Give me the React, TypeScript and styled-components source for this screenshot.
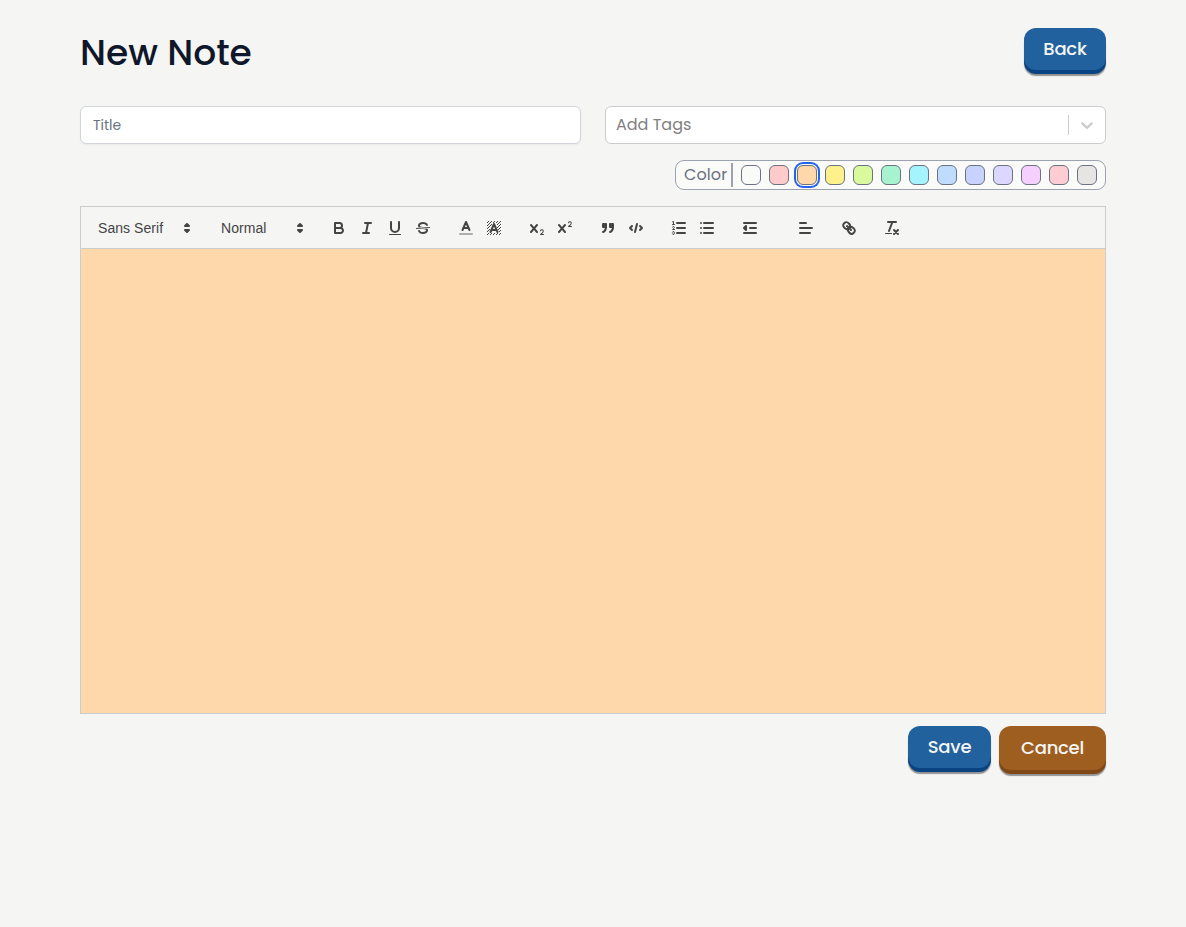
import React from "react";
import styled, { createGlobalStyle } from "styled-components";

const GlobalStyle = createGlobalStyle`
  *, *::before, *::after { box-sizing: border-box; }
  body {
    margin: 0;
    background: #f5f5f4;
    font-family: Poppins, Inter, sans-serif;
    color: #0f172a;
  }
`;

const Page = styled.main`
  width: 1026px;
  min-height: 100vh;
  margin: 0 auto;
  padding-top: 28px;
`;

const Header = styled.header`
  display: flex;
  justify-content: space-between;
  align-items: flex-start;
  height: 78px;
`;

const Heading = styled.h1`
  margin: 5px 0 0;
  font-size: 36px;
  line-height: 40px;
  font-weight: 500;
`;

const Button = styled.button<{ $tone: "blue" | "brown"; $width: number; $height: number }>`
  width: ${(p) => p.$width}px;
  height: ${(p) => p.$height}px;
  padding: 0 0 1px;
  border: 0;
  border-radius: 12px;
  font: inherit;
  font-size: 18px;
  font-weight: 500;
  letter-spacing: -0.25px;
  color: #f5f5f4;
  background: ${(p) => (p.$tone === "blue" ? "#20619e" : "#9e5e20")};
  box-shadow: 0 4px 0 ${(p) => (p.$tone === "blue" ? "#0a4382" : "#7e4817")},
    0 5.5px 1px rgba(0, 0, 0, 0.4);
`;

const Fields = styled.div`
  display: grid;
  grid-template-columns: 501px 501px;
  gap: 24px;
`;

const TitleInput = styled.input`
  height: 38px;
  padding: 0 12px;
  border: 1px solid #d1d5db;
  border-radius: 6px;
  background: #fff;
  box-shadow: 0 1px 2px rgba(0, 0, 0, 0.05);
  font: inherit;
  font-size: 14px;
  outline: 0;
  &::placeholder { color: #6b7280; opacity: 1; }
`;

const TagSelect = styled.div`
  display: flex;
  align-items: center;
  height: 38px;
  padding-left: 10px;
  border: 1px solid #ccc;
  border-radius: 6px;
  background: #fff;
  color: #808080;
  font-size: 16px;
`;

const TagPlaceholder = styled.span`
  flex: 1;
  padding-bottom: 1px;
`;

const Separator = styled.span`
  width: 1px;
  height: 20px;
  background: #ccc;
`;

const Chevron = styled.svg`
  width: 20px;
  height: 20px;
  margin: 0 8px;
  fill: #ccc;
`;

const Palette = styled.div`
  display: flex;
  align-items: center;
  width: 431px;
  height: 30px;
  margin: 16px 0 16px auto;
  padding-left: 8px;
  border: 1px solid #9ca3af;
  border-radius: 9px;
  background: #fafaf9;
`;

const PaletteLabel = styled.span`
  width: 49px;
  height: 24px;
  margin-right: 8px;
  border-right: 2px solid #9ca3af;
  color: #6b7280;
  font-size: 16px;
  line-height: 23px;
  letter-spacing: 0.1px;
`;

const Swatch = styled.button<{ $color: string; $selected: boolean }>`
  width: 20px;
  height: 20px;
  margin-right: 8px;
  padding: 0;
  border: 1px solid #6b7280;
  border-radius: 6px;
  background: ${(p) => p.$color};
  box-shadow: ${(p) => (p.$selected ? "0 0 0 1px #fafaf9, 0 0 0 3px #2563eb" : "none")};
`;

const Toolbar = styled.div`
  display: flex;
  align-items: flex-start;
  height: 43px;
  padding: 9px 8px 8px;
  border: 1px solid #ccc;
  font-family: "Liberation Sans", Arial, sans-serif;
`;

const Group = styled.div<{ $gap?: number }>`
  display: flex;
  margin-right: ${(p) => p.$gap ?? 15}px;
`;

const Picker = styled.div<{ $width: number }>`
  display: flex;
  align-items: center;
  justify-content: space-between;
  width: ${(p) => p.$width}px;
  height: 24px;
  padding: 0 1px 0 9px;
  color: #444;
  font-size: 14px;
  font-weight: 500;
  letter-spacing: 0.06px;
`;

const Tool = styled.button`
  display: flex;
  width: 28px;
  height: 24px;
  padding: 3px 5px;
  border: 0;
  background: none;
`;

const Glyph = styled.svg`
  width: 18px;
  height: 18px;
  fill: none;
  stroke: #444;
  stroke-width: 2;
  stroke-linecap: round;
  stroke-linejoin: round;
  .thin { stroke-width: 1; }
  .fill { fill: #444; stroke: none; }
  .solid { fill: #444; }
`;

const Editor = styled.div`
  height: 465px;
  border: 1px solid #ccc;
  border-top: 0;
  background: #fed7aa;
`;

const Actions = styled.div`
  display: flex;
  justify-content: flex-end;
  align-items: flex-start;
  gap: 8px;
  margin-top: 12px;
`;

const swatches = [
  "#fafaf9", "#fecaca", "#fed7aa", "#fef08a", "#d9f99d", "#a7f3d0", "#a5f3fc",
  "#bfdbfe", "#c7d2fe", "#ddd6fe", "#f5d0fe", "#fecdd3", "#e7e5e4",
];
const selectedColor = "#fed7aa";

// Diagonal hatching behind the highlighted letter, left open around its strokes.
const hatch: [number, number][] = [];
for (let y = 2; y < 16; y++) {
  for (let x = 2; x < 16; x++) {
    const half = y < 4 || y > 13 ? -1 : 1.8 + (y - 4) * 0.38;
    if ((x + y) % 3 === 2 && Math.abs(x + 0.5 - 9) > half) hatch.push([x, y]);
  }
}

const CROSS =
  "M9.65,5.241a1,1,0,0,0-1.409.108L6,7.964,3.759,5.349A1,1,0,0,0,2.192,6.592Q2.215,6.621,2.241,6.649L4.684,9.5,2.241,12.35A1,1,0,0,0,3.71,13.707q0.026-.028.049-0.057L6,11.036,8.241,13.65a1,1,0,1,0,1.567-1.243Q9.785,12.378,9.759,12.35L7.316,9.5,9.759,6.651A1,1,0,0,0,9.65,5.241Z";

const icons: Record<string, React.ReactNode> = {
  bold: (
    <>
      <path d="M5,4H9.5A2.5,2.5,0,0,1,12,6.5v0A2.5,2.5,0,0,1,9.5,9H5V4Z" />
      <path d="M5,9h5.5A2.5,2.5,0,0,1,13,11.5v0A2.5,2.5,0,0,1,10.5,14H5V9Z" />
    </>
  ),
  italic: <path d="M7,4H13M5,14H11M8,14L10,4" />,
  underline: (
    <>
      <path d="M5,3V9a4.012,4.012,0,0,0,4,4H9a4.012,4.012,0,0,0,4-4V3" />
      <rect className="fill" height="1" rx="0.5" width="12" x="3" y="15" />
    </>
  ),
  strike: (
    <>
      <line className="thin" x1="15.5" x2="2.5" y1="8.5" y2="9.5" />
      <path className="fill" d="M9.007,8C6.542,7.791,6,7.519,6,6.5,6,5.792,7.283,5,9,5c1.571,0,2.765.679,2.969,1.309a1,1,0,0,0,1.9-.617C13.356,4.106,11.354,3,9,3,6.2,3,4,4.538,4,6.5a3.2,3.2,0,0,0,.5,1.843Z" />
      <path className="fill" d="M8.984,10C11.457,10.208,12,10.479,12,11.5c0,0.708-1.283,1.5-3,1.5-1.571,0-2.765-.679-2.969-1.309a1,1,0,1,0-1.9.617C4.644,13.894,6.646,15,9,15c2.8,0,5-1.538,5-3.5a3.2,3.2,0,0,0-.5-1.843Z" />
    </>
  ),
  color: (
    <>
      <line opacity="0.4" x1="3" x2="15" y1="15" y2="15" />
      <path d="M5.5,11L9,3L12.5,11M11.63,9H6.38" />
    </>
  ),
  background: (
    <>
      {hatch.map(([x, y]) => (
        <rect key={`${x}-${y}`} className="fill" x={x} y={y} width="1" height="1" />
      ))}
      <path d="M5.5,13L9,5L12.5,13M11.63,11H6.38" />
    </>
  ),
  sub: (
    <>
      <path className="fill" d="M15.5,15H13.861a3.858,3.858,0,0,0,1.914-2.975,1.8,1.8,0,0,0-1.6-1.751A1.921,1.921,0,0,0,12.021,11.7a0.5,0.5,0,1,0,.957.291h0a0.914,0.914,0,0,1,1.053-.725,0.81,0.81,0,0,1,.744.762c0,1.076-1.17,1.87-1.94,2.431A1.456,1.456,0,0,0,12,15.5a0.5,0.5,0,0,0,.5.5h3A0.5,0.5,0,0,0,15.5,15Z" />
      <path className="fill" d={CROSS} />
    </>
  ),
  sup: (
    <>
      <path className="fill" d="M15.5,7H13.861a4.015,4.015,0,0,0,1.914-2.975,1.8,1.8,0,0,0-1.6-1.751A1.922,1.922,0,0,0,12.021,3.7a0.5,0.5,0,1,0,.957.291,0.917,0.917,0,0,1,1.053-.725,0.81,0.81,0,0,1,.744.762c0,1.077-1.164,1.925-1.934,2.486A1.423,1.423,0,0,0,12,7.5a0.5,0.5,0,0,0,.5.5h3A0.5,0.5,0,0,0,15.5,7Z" />
      <path className="fill" d={CROSS} />
    </>
  ),
  quote: (
    <>
      <rect className="solid" height="3" width="3" x="4" y="5" />
      <rect className="solid" height="3" width="3" x="11" y="5" />
      <path className="solid" d="M7,8c0,4.031-3,5-3,5" />
      <path className="solid" d="M14,8c0,4.031-3,5-3,5" />
    </>
  ),
  code: <path d="M5,7L3,9L5,11M13,7L15,9L13,11M10,5L8,13" />,
  ordered: (
    <>
      <path d="M7,4H15M7,9H15M7,14H15" />
      <line className="thin" x1="2.5" x2="4.5" y1="5.5" y2="5.5" />
      <path className="fill" d="M3.5,6A0.5,0.5,0,0,1,3,5.5V3.085l-0.276.138A0.5,0.5,0,0,1,2.053,3c-0.124-.247-0.023-0.324.224-0.447l1-.5A0.5,0.5,0,0,1,4,2.5v3A0.5,0.5,0,0,1,3.5,6Z" />
      <path className="thin" d="M4.5,10.5h-2c0-.234,1.85-1.076,1.85-2.234A0.959,0.959,0,0,0,2.5,8.156" />
      <path className="thin" d="M2.5,14.846a0.959,0.959,0,0,0,1.85-.11A0.7,0.7,0,0,0,3.75,14a0.688,0.688,0,0,0,.6-0.736,0.959,0.959,0,0,0-1.85-.109" />
    </>
  ),
  bullet: <path d="M6,4H15M6,9H15M6,14H15M3,4H3M3,9H3M3,14H3" />,
  outdent: (
    <>
      <path d="M3,14H15M3,4H15M9,9H15" />
      <path className="solid" d="M5,7V11L3,9Z" />
    </>
  ),
  align: <path d="M3,9H15M3,14H13M3,4H9" />,
  link: (
    <>
      <line x1="7" x2="11" y1="7" y2="11" />
      <path d="M8.9,4.577a3.476,3.476,0,0,1,.36,4.679A3.476,3.476,0,0,1,4.577,8.9C3.185,7.5,2.035,6.4,4.217,4.217S7.5,3.185,8.9,4.577Z" />
      <path d="M13.423,9.1a3.476,3.476,0,0,0-4.679-.36,3.476,3.476,0,0,0,.36,4.679c1.392,1.392,2.5,2.542,4.679.36S14.815,10.5,13.423,9.1Z" />
    </>
  ),
  clean: (
    <>
      <path d="M5,3H13M6,12L9.35,3M11,11L15,15M15,11L11,15" />
      <rect className="fill" height="1" rx="0.5" width="7" x="2" y="14" />
    </>
  ),
  updown: <path d="M7,11L9,13L11,11ZM7,7L9,5L11,7Z" />,
};

const Icon = ({ name }: { name: string }) => (
  <Glyph viewBox="0 0 18 18" aria-hidden="true">{icons[name]}</Glyph>
);

const toolGroups: { tools: string[]; gap?: number }[] = [
  { tools: ["bold", "italic", "underline", "strike"] },
  { tools: ["color", "background"] },
  { tools: ["sub", "sup"] },
  { tools: ["quote", "code"] },
  { tools: ["ordered", "bullet"] },
  { tools: ["outdent"], gap: 28 },
  { tools: ["align"] },
  { tools: ["link"] },
  { tools: ["clean"] },
];

export default function App() {
  return (
    <>
      <GlobalStyle />
      <Page>
        <Header>
          <Heading>New Note</Heading>
          <Button $tone="blue" $width={82} $height={42}>Back</Button>
        </Header>
        <Fields>
          <TitleInput placeholder="Title" />
          <TagSelect>
            <TagPlaceholder>Add Tags</TagPlaceholder>
            <Separator />
            <Chevron viewBox="0 0 20 20" aria-hidden="true">
              <path d="M4.516 7.548c0.436-0.446 1.043-0.481 1.576 0l3.908 3.747 3.908-3.747c0.533-0.481 1.141-0.446 1.574 0 0.436 0.445 0.408 1.197 0 1.615-0.406 0.418-4.695 4.502-4.695 4.502-0.217 0.223-0.502 0.335-0.787 0.335s-0.57-0.112-0.789-0.335c0 0-4.287-4.084-4.695-4.502s-0.436-1.17 0-1.615z" />
            </Chevron>
          </TagSelect>
        </Fields>
        <Palette>
          <PaletteLabel>Color</PaletteLabel>
          {swatches.map((color) => (
            <Swatch key={color} $color={color} $selected={color === selectedColor} aria-label={color} />
          ))}
        </Palette>
        <Toolbar>
          <Group>
            <Picker $width={108}>Sans Serif<Icon name="updown" /></Picker>
          </Group>
          <Group>
            <Picker $width={98}>Normal<Icon name="updown" /></Picker>
          </Group>
          {toolGroups.map(({ tools, gap }) => (
            <Group key={tools[0]} $gap={gap}>
              {tools.map((name) => (
                <Tool key={name} aria-label={name}><Icon name={name} /></Tool>
              ))}
            </Group>
          ))}
        </Toolbar>
        <Editor />
        <Actions>
          <Button $tone="blue" $width={83} $height={42}>Save</Button>
          <Button $tone="brown" $width={107} $height={44}>Cancel</Button>
        </Actions>
      </Page>
    </>
  );
}
